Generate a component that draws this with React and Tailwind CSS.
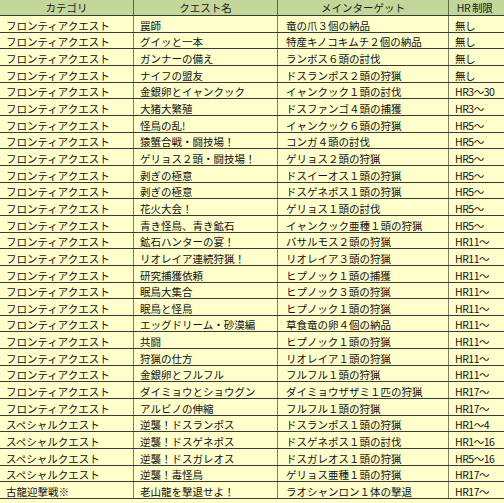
import React from 'react';

const rows = [
  ['フロンティアクエスト', '罠師', '竜の爪３個の納品', '無し'],
  ['フロンティアクエスト', 'グイッと一本', '特産キノコキムチ２個の納品', '無し'],
  ['フロンティアクエスト', 'ガンナーの備え', 'ランボス６頭の討伐', '無し'],
  ['フロンティアクエスト', 'ナイフの盟友', 'ドスランポス２頭の狩猟', '無し'],
  ['フロンティアクエスト', '金銀卵とイャンクック', 'イャンクック１頭の討伐', 'HR3～30'],
  ['フロンティアクエスト', '大猪大繁殖', 'ドスファンゴ４頭の捕獲', 'HR3～'],
  ['フロンティアクエスト', '怪鳥の乱!', 'イャンクック６頭の狩猟', 'HR5～'],
  ['フロンティアクエスト', '猿蟹合戦・闘技場！', 'コンガ４頭の討伐', 'HR5～'],
  ['フロンティアクエスト', 'ゲリョス２頭・闘技場！', 'ゲリョス２頭の狩猟', 'HR5～'],
  ['フロンティアクエスト', '剥ぎの極意', 'ドスイーオス１頭の狩猟', 'HR5～'],
  ['フロンティアクエスト', '剥ぎの極意', 'ドスゲネポス１頭の狩猟', 'HR5～'],
  ['フロンティアクエスト', '花火大会！', 'ゲリョス１頭の討伐', 'HR5～'],
  ['フロンティアクエスト', '青き怪鳥、青き鉱石', 'イャンクック亜種１頭の狩猟', 'HR5～'],
  ['フロンティアクエスト', '鉱石ハンターの宴！', 'バサルモス２頭の狩猟', 'HR11～'],
  ['フロンティアクエスト', 'リオレイア連続狩猟！', 'リオレイア３頭の狩猟', 'HR11～'],
  ['フロンティアクエスト', '研究捕獲依頼', 'ヒプノック１頭の捕獲', 'HR11～'],
  ['フロンティアクエスト', '眠鳥大集合', 'ヒプノック３頭の狩猟', 'HR11～'],
  ['フロンティアクエスト', '眠鳥と怪鳥', 'ヒプノック１頭の狩猟', 'HR11～'],
  ['フロンティアクエスト', 'エッグドリーム・砂漠編', '草食竜の卵４個の納品', 'HR11～'],
  ['フロンティアクエスト', '共闘', 'ヒプノック１頭の狩猟', 'HR11～'],
  ['フロンティアクエスト', '狩猟の仕方', 'リオレイア１頭の狩猟', 'HR11～'],
  ['フロンティアクエスト', '金銀卵とフルフル', 'フルフル１頭の狩猟', 'HR11～'],
  ['フロンティアクエスト', 'ダイミョウとショウグン', 'ダイミョウザザミ１匹の狩猟', 'HR17～'],
  ['フロンティアクエスト', 'アルビノの伸縮', 'フルフル１頭の狩猟', 'HR17～'],
  ['スペシャルクエスト', '逆襲！ドスランポス', 'ドスランポス１頭の狩猟', 'HR1～4'],
  ['スペシャルクエスト', '逆襲！ドスゲネポス', 'ドスゲネポス１頭の討伐', 'HR1～16'],
  ['スペシャルクエスト', '逆襲！ドスガレオス', 'ドスガレオス１頭の狩猟', 'HR5～16'],
  ['スペシャルクエスト', '逆襲！毒怪鳥', 'ゲリョス亜種１頭の狩猟', 'HR17～'],
  ['古龍迎撃戦※', '老山龍を撃退せよ！', 'ラオシャンロン１体の撃退', 'HR17～'],
];

const cols = 'grid grid-cols-[134px_144px_171px_1fr]';

export default function App() {
  return (
    <div className="w-[504px] h-[503px] overflow-hidden bg-[#ffffcc] text-[#111] font-['Noto_Sans_CJK_JP',sans-serif] text-[10.5px] leading-[12px]">
      {/* header */}
      <div className={`${cols} h-[16px] bg-[#c4d79b] border-b border-[#3a3a3a] text-[#1a1a1a]`}>
        <div className="border-r border-[#5e6b45] flex items-end justify-center pb-[1px]">カテゴリ</div>
        <div className="border-r border-[#5e6b45] flex items-end justify-center pb-[1px]">クエスト名</div>
        <div className="border-r border-[#5e6b45] flex items-end justify-center pb-[1px]">メインターゲット</div>
        <div className="flex items-end justify-center pb-[1px] pr-[4px] tracking-[-0.4px]">HR 制限</div>
      </div>

      {rows.map((r, i) => (
        <div key={i} className={`${cols} h-[16.67px] border-b border-[#3a3a3a]`}>
          <div className="border-r border-[#7f7f60] flex items-end pl-[6px] overflow-hidden whitespace-nowrap">{r[0]}</div>
          <div className="border-r border-[#7f7f60] flex items-end pl-[6px] overflow-hidden whitespace-nowrap">{r[1]}</div>
          <div className="border-r border-[#7f7f60] flex items-end pl-[8px] overflow-hidden whitespace-nowrap">{r[2]}</div>
          <div className="flex items-end pl-[6px] overflow-hidden whitespace-nowrap tracking-[-0.5px]">{r[3]}</div>
        </div>
      ))}
    </div>
  );
}
